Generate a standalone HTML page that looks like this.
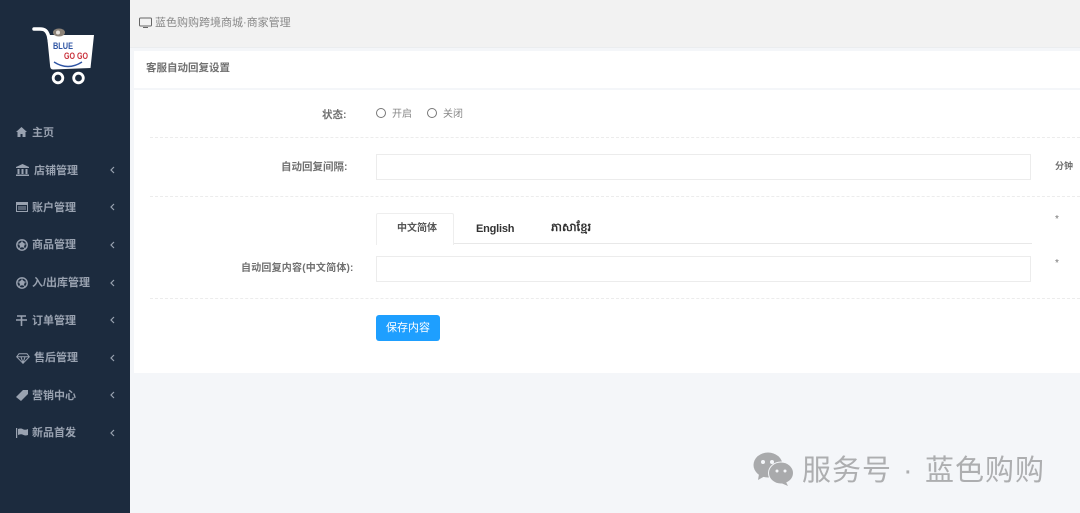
<!DOCTYPE html>
<html><head><meta charset="utf-8"><style>
html,body{margin:0;padding:0}
body{width:1080px;height:513px;overflow:hidden;position:relative;background:#f4f6f9;font-family:"Liberation Sans","Noto Sans CJK SC",sans-serif}
div,span,svg{position:absolute}
.t{white-space:nowrap;line-height:16px}
.m{color:#99a2b0;font-size:11px;font-weight:700;left:0;top:0}
.a{left:110px;width:5px;height:8px}
.l{color:#707070;font-size:10.500px;font-weight:700}
.d{left:150px;width:930px;height:0;border-top:1px dashed #ececec}
.i{left:376px;width:653px;height:24px;background:#fff;border:1px solid #ececec}
.r{width:8px;height:8px;border:1px solid #777;border-radius:50%;background:#fff}
</style></head><body>
<div style="left:0;top:0;width:130px;height:513px;background:#1c2b3e"></div>
<div style="left:130px;top:0;width:950px;height:47px;background:#f2f2f2;border-bottom:1px solid #ebedef"></div>
<div style="left:134px;top:51px;width:946px;height:322px;background:#fff"></div>
<div style="left:134px;top:88px;width:946px;height:2px;background:#f4f6f9"></div>

<!-- logo -->
<svg style="left:30px;top:25px" width="68" height="62" viewBox="0 0 68 62">
<path d="M4 4H10C15 4 17 6 18.500 11L21 24" fill="none" stroke="#fff" stroke-width="3.500" stroke-linecap="round"/>
<path d="M17 10H64L60.500 43 23 44.500Q20 44.500 20 40Z" fill="#fff"/>
<ellipse cx="29" cy="7.500" rx="6" ry="4" fill="#8d8378"/>
<circle cx="28" cy="7.500" r="2" fill="#e5e0da"/>
<text x="23" y="24" font-family="Liberation Sans" font-size="9.500" font-weight="700" fill="#2f55a4" textLength="20" lengthAdjust="spacingAndGlyphs">BLUE</text>
<text x="34" y="34" font-family="Liberation Sans" font-size="9.500" font-weight="700" fill="#c9303a" textLength="24" lengthAdjust="spacingAndGlyphs">GO GO</text>
<path d="M24 37Q38 46 52 37" fill="none" stroke="#2f55a4" stroke-width="1.400"/>
<circle cx="28" cy="53" r="4.800" fill="none" stroke="#fff" stroke-width="2.800"/>
<circle cx="48.500" cy="53" r="4.800" fill="none" stroke="#fff" stroke-width="2.800"/>
</svg>

<!-- menu -->
<svg style="left:16px;top:127px" width="11" height="10" viewBox="0 0 11 10"><path d="M5.500 0 11 5 9.500 5V10H6.500V7H4.500V10H1.500V5H0Z" fill="#99a2b0"/></svg>
<span class="t m" style="left:32px;top:125px">主页</span>

<svg style="left:16px;top:164px" width="13" height="12" viewBox="0 0 13 12"><path d="M6.500 0 13 3V4H0V3ZM1.500 5H3.500V10H1.500ZM5.500 5H7.500V10H5.500ZM9.500 5H11.500V10H9.500ZM0 10.500H13V12H0Z" fill="#99a2b0"/></svg>
<span class="t m" style="left:34px;top:163px">店铺管理</span>
<svg class="a" style="top:166px" viewBox="0 0 5 8"><path d="M4 1 1 4 4 7" fill="none" stroke="#99a2b0" stroke-width="1.200"/></svg>

<svg style="left:16px;top:202px" width="12" height="10" viewBox="0 0 12 10"><path d="M0 0H12V10H0ZM1 3V9H11V3ZM2 4.500H10V5.500H2ZM2 6.500H10V7.500H2Z" fill="#99a2b0" fill-rule="evenodd"/></svg>
<span class="t m" style="left:32px;top:200px">账户管理</span>
<svg class="a" style="top:203px" viewBox="0 0 5 8"><path d="M4 1 1 4 4 7" fill="none" stroke="#99a2b0" stroke-width="1.200"/></svg>

<svg style="left:16px;top:239px" width="12" height="12" viewBox="0 0 12 12"><circle cx="6" cy="6" r="5.200" fill="none" stroke="#99a2b0" stroke-width="1.400"/><path d="M6 3 8.500 5 7.500 8H4.500L3.500 5ZM6 1V3M1 5 3.500 5M11 5 8.500 5M3 10 4.500 8M9 10 7.500 8" fill="#99a2b0" stroke="#99a2b0" stroke-width=".8"/></svg>
<span class="t m" style="left:32px;top:237px">商品管理</span>
<svg class="a" style="top:241px" viewBox="0 0 5 8"><path d="M4 1 1 4 4 7" fill="none" stroke="#99a2b0" stroke-width="1.200"/></svg>

<svg style="left:16px;top:277px" width="12" height="12" viewBox="0 0 12 12"><circle cx="6" cy="6" r="5.200" fill="none" stroke="#99a2b0" stroke-width="1.400"/><path d="M6 3 8.500 5 7.500 8H4.500L3.500 5ZM6 1V3M1 5 3.500 5M11 5 8.500 5M3 10 4.500 8M9 10 7.500 8" fill="#99a2b0" stroke="#99a2b0" stroke-width=".8"/></svg>
<span class="t m" style="left:32px;top:275px">入/出库管理</span>
<svg class="a" style="top:279px" viewBox="0 0 5 8"><path d="M4 1 1 4 4 7" fill="none" stroke="#99a2b0" stroke-width="1.200"/></svg>

<svg style="left:16px;top:315px" width="11" height="11" viewBox="0 0 11 11"><path d="M1 1H10M0 5H11M5.500 1V11" fill="none" stroke="#99a2b0" stroke-width="1.600"/></svg>
<span class="t m" style="left:32px;top:313px">订单管理</span>
<svg class="a" style="top:316px" viewBox="0 0 5 8"><path d="M4 1 1 4 4 7" fill="none" stroke="#99a2b0" stroke-width="1.200"/></svg>

<svg style="left:16px;top:353px" width="14" height="11" viewBox="0 0 14 11"><path d="M3 .7H11L13.300 3.800 7 10.300 .7 3.800ZM1 3.800H13M5 3.800 7 10 9 3.800" fill="none" stroke="#99a2b0" stroke-width="1"/></svg>
<span class="t m" style="left:34px;top:350px">售后管理</span>
<svg class="a" style="top:354px" viewBox="0 0 5 8"><path d="M4 1 1 4 4 7" fill="none" stroke="#99a2b0" stroke-width="1.200"/></svg>

<svg style="left:16px;top:390px" width="12" height="11" viewBox="0 0 12 11"><path d="M7 0H12V4L5 11 0 7Z" fill="#99a2b0"/></svg>
<span class="t m" style="left:32px;top:388px">营销中心</span>
<svg class="a" style="top:391px" viewBox="0 0 5 8"><path d="M4 1 1 4 4 7" fill="none" stroke="#99a2b0" stroke-width="1.200"/></svg>

<svg style="left:16px;top:428px" width="12" height="10" viewBox="0 0 12 10"><path d="M0 0H1.200V10H0ZM2 1Q5 0 7 1.200T12 1V7Q9 8 7 6.800T2 7Z" fill="#99a2b0"/></svg>
<span class="t m" style="left:32px;top:425px">新品首发</span>
<svg class="a" style="top:429px" viewBox="0 0 5 8"><path d="M4 1 1 4 4 7" fill="none" stroke="#99a2b0" stroke-width="1.200"/></svg>

<!-- header -->
<svg style="left:139px;top:17px" width="13" height="12" viewBox="0 0 13 12"><rect x=".5" y="1" width="12" height="8" rx="1" fill="none" stroke="#666" stroke-width="1"/><path d="M4 10.500H9" stroke="#666" stroke-width="1"/></svg>
<span class="t" style="left:155px;top:15px;font-size:11px;color:#888">蓝色购购跨境商城·商家管理</span>
<span class="t" style="left:146px;top:60px;font-size:10.500px;font-weight:700;color:#707070">客服自动回复设置</span>

<!-- status -->
<span class="t l" style="left:322px;top:107px">状态:</span>
<div class="r" style="left:376px;top:108px"></div>
<span class="t" style="left:392px;top:107px;font-size:10px;color:#888">开启</span>
<div class="r" style="left:427px;top:108px"></div>
<span class="t" style="left:443px;top:107px;font-size:10px;color:#888">关闭</span>
<div class="d" style="top:137px"></div>

<!-- interval -->
<span class="t l" style="left:281px;top:159px">自动回复间隔:</span>
<div class="i" style="top:154px"></div>
<span class="t" style="left:1055px;top:158px;font-size:9px;font-weight:700;color:#707070">分钟</span>
<div class="d" style="top:196px"></div>

<!-- tabs -->
<div style="left:376px;top:243px;width:656px;height:1px;background:#e8e8e8"></div>
<div style="left:376px;top:213px;width:76px;height:31px;background:#fff;border:1px solid #eee;border-bottom:none;border-radius:2px 2px 0 0"></div>
<span class="t" style="left:397px;top:221px;font-size:10px;font-weight:700;color:#555">中文简体</span>
<span class="t" style="left:476px;top:221px;font-size:11px;font-weight:700;color:#333;letter-spacing:-.2px">English</span>
<span class="t" style="left:551px;top:220px;font-size:11.500px;font-weight:700;color:#333">ភាសាខ្មែរ</span>
<span class="t" style="left:1055px;top:212px;font-size:10px;color:#777">*</span>

<span class="t l" style="left:241px;top:261px;font-size:10px;letter-spacing:.2px">自动回复内容(中文简体):</span>
<div class="i" style="top:256px"></div>
<span class="t" style="left:1055px;top:256px;font-size:10px;color:#777">*</span>
<div class="d" style="top:298px"></div>

<div style="left:376px;top:315px;width:64px;height:26px;background:#1e9fff;border-radius:3px;color:#fff;font-size:11px;line-height:26px;text-align:center">保存内容</div>

<!-- watermark -->
<svg style="left:753px;top:452px" width="42" height="34" viewBox="0 0 42 34">
<ellipse cx="15" cy="13" rx="14.500" ry="12.500" fill="#a9aaac"/>
<path d="M6 22 5 28 12 24Z" fill="#a9aaac"/>
<ellipse cx="28" cy="21" rx="12.500" ry="11" fill="#a9aaac" stroke="#f4f6f9" stroke-width="1"/>
<path d="M33 30 35 34 28 31Z" fill="#a9aaac"/>
<circle cx="10" cy="10" r="2" fill="#f4f6f9"/><circle cx="19" cy="10" r="2" fill="#f4f6f9"/>
<circle cx="24" cy="19" r="1.500" fill="#f4f6f9"/><circle cx="32" cy="19" r="1.500" fill="#f4f6f9"/>
</svg>
<span class="t" style="left:802px;top:454px;font-size:29px;line-height:34px;color:#adaeb0;letter-spacing:1px">服务号</span>
<span class="t" style="left:903px;top:454px;font-size:29px;line-height:34px;color:#adaeb0">·</span>
<span class="t" style="left:925px;top:454px;font-size:29px;line-height:34px;color:#adaeb0;letter-spacing:1px">蓝色购购</span>
</body></html>
